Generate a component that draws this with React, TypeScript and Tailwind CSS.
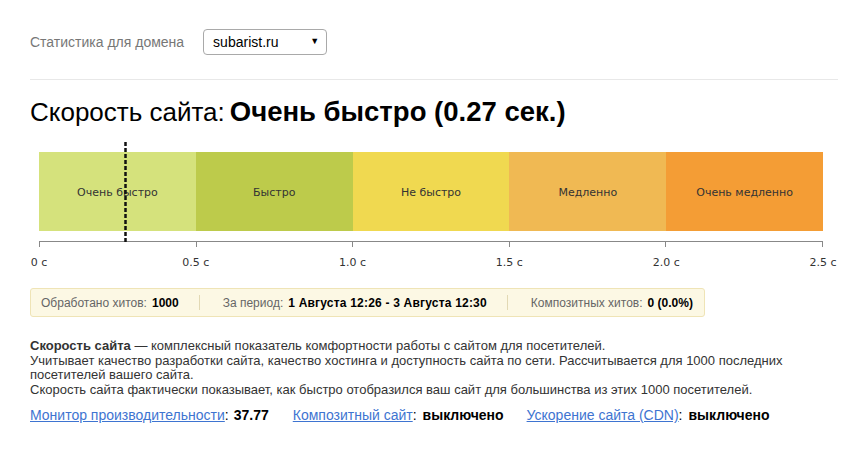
import type {JSX} from 'react';

type Segment = {
    label: string
    color: string
}

const segments: Segment[] = [
    {label: "Очень быстро", color: "bg-[#d5e27c]"},
    {label: "Быстро", color: "bg-[#bdcb4b]"},
    {label: "Не быстро", color: "bg-[#f0d950]"},
    {label: "Медленно", color: "bg-[#f0b953]"},
    {label: "Очень медленно", color: "bg-[#f49d35]"},
];

const ticks = ["0 с", "0.5 с", "1.0 с", "1.5 с", "2.0 с", "2.5 с"];
const tickPos = ["left-[0%]", "left-[20%]", "left-[40%]", "left-[60%]", "left-[80%]", "left-[100%]"];

function SpeedChart(): JSX.Element {
    return (
        <div className="ml-[9px] w-[784px] mt-[25px] font-['DejaVu_Sans',Verdana,sans-serif]">
            <div className="relative flex h-[79px]">
                {segments.map((s) => (
                    <div key={s.label}
                         className={`${s.color} flex-1 flex items-center justify-center pt-[3px] text-[11px] text-[#333]`}>
                        {s.label}
                    </div>
                ))}
                {/* marker: 0.27 s */}
                <svg className="absolute left-[85px] top-[-10px]" width="3" height="101">
                    <line x1="1.5" y1="0" x2="1.5" y2="101" stroke="#111" strokeWidth="2.5" strokeDasharray="4 2"/>
                </svg>
            </div>
            <div className="mt-[10px] flex border-t border-[#888]">
                {segments.map((s, i) => (
                    <div key={s.label}
                         className={`flex-1 h-[5px] border-l border-[#888] ${i === 4 ? "border-r" : ""}`}/>
                ))}
            </div>
            <div className="relative h-[12px] mt-[10px] text-[11px] leading-[12px] text-[#333]">
                {ticks.map((t, i) => (
                    <span key={t} className={`absolute top-0 ${tickPos[i]} -translate-x-1/2 whitespace-nowrap`}>{t}</span>
                ))}
            </div>
        </div>
    );
}

function InfoBar(): JSX.Element {
    return (
        <div
            className="mt-[19px] w-[675px] h-[29px] flex items-center rounded-[3px] border border-[#efe4b6] bg-[#fcf8e4] text-[12px] pl-[10px]">
            <span className="text-[#666]">Обработано хитов:</span>
            <b className="ml-[5px] text-black">1000</b>
            <span className="mx-[20px] h-[15px] border-l border-[#e2d9b4]"/>
            <span className="ml-[3px] text-[#666]">За период:</span>
            <b className="ml-[5px] text-black tracking-[0.2px]">1 Августа 12:26 - 3 Августа 12:30</b>
            <span className="mx-[20px] h-[15px] border-l border-[#e2d9b4]"/>
            <span className="ml-[3px] text-[#666]">Композитных хитов:</span>
            <b className="ml-[5px] text-black">0 (0.0%)</b>
        </div>
    );
}

function App(): JSX.Element {
    return (
        <div className="px-[30px] pt-[29px] font-['Liberation_Sans',Arial,sans-serif] bg-white min-h-screen">
            <div className="flex items-center h-[26px]">
                <span className="text-[14px] text-[#777]">Статистика для домена</span>
                <div
                    className="ml-[19px] w-[124px] h-[26px] flex items-center justify-between rounded-[4px] border border-[#a9a9a9] pl-[9px] pr-[7px] text-[14px] text-black">
                    <span>subarist.ru</span>
                    <span className="text-[9px]">▼</span>
                </div>
            </div>

            <div className="mt-[24px] border-t border-[#e8e8e8]"/>

            <h1 className="mt-[17px] flex items-baseline text-[26px] leading-[30px] text-black">
                <span>Скорость сайта:</span>
                <b className="ml-[5px] text-[27.5px]">Очень быстро (0.27 сек.)</b>
            </h1>

            <SpeedChart/>

            <InfoBar/>

            <div className="mt-[22px] w-[808px] text-[13px] leading-[14.5px] text-[#333]">
                <p><b>Скорость сайта</b> — комплексный показатель комфортности работы с сайтом для посетителей.</p>
                <p>Учитывает качество разработки сайта, качество хостинга и доступность сайта по сети. Рассчитывается для
                    1000 последних посетителей вашего сайта.</p>
                <p>Скорость сайта фактически показывает, как быстро отобразился ваш сайт для большинства из этих 1000
                    посетителей.</p>
            </div>

            <div className="mt-[10px] flex text-[14px] leading-[17px]">
                <span>
                    <a href="#" className="text-[#3e74d1] underline">Монитор производительности</a>:<b
                    className="ml-[5px]">37.77</b>
                </span>
                <span className="ml-[24px]">
                    <a href="#" className="text-[#3e74d1] underline">Композитный сайт</a>:<b
                    className="ml-[6px]">выключено</b>
                </span>
                <span className="ml-[23px]">
                    <a href="#" className="text-[#3e74d1] underline">Ускорение сайта (CDN)</a>:<b
                    className="ml-[6px]">выключено</b>
                </span>
            </div>
        </div>
    );
}

export default App;
